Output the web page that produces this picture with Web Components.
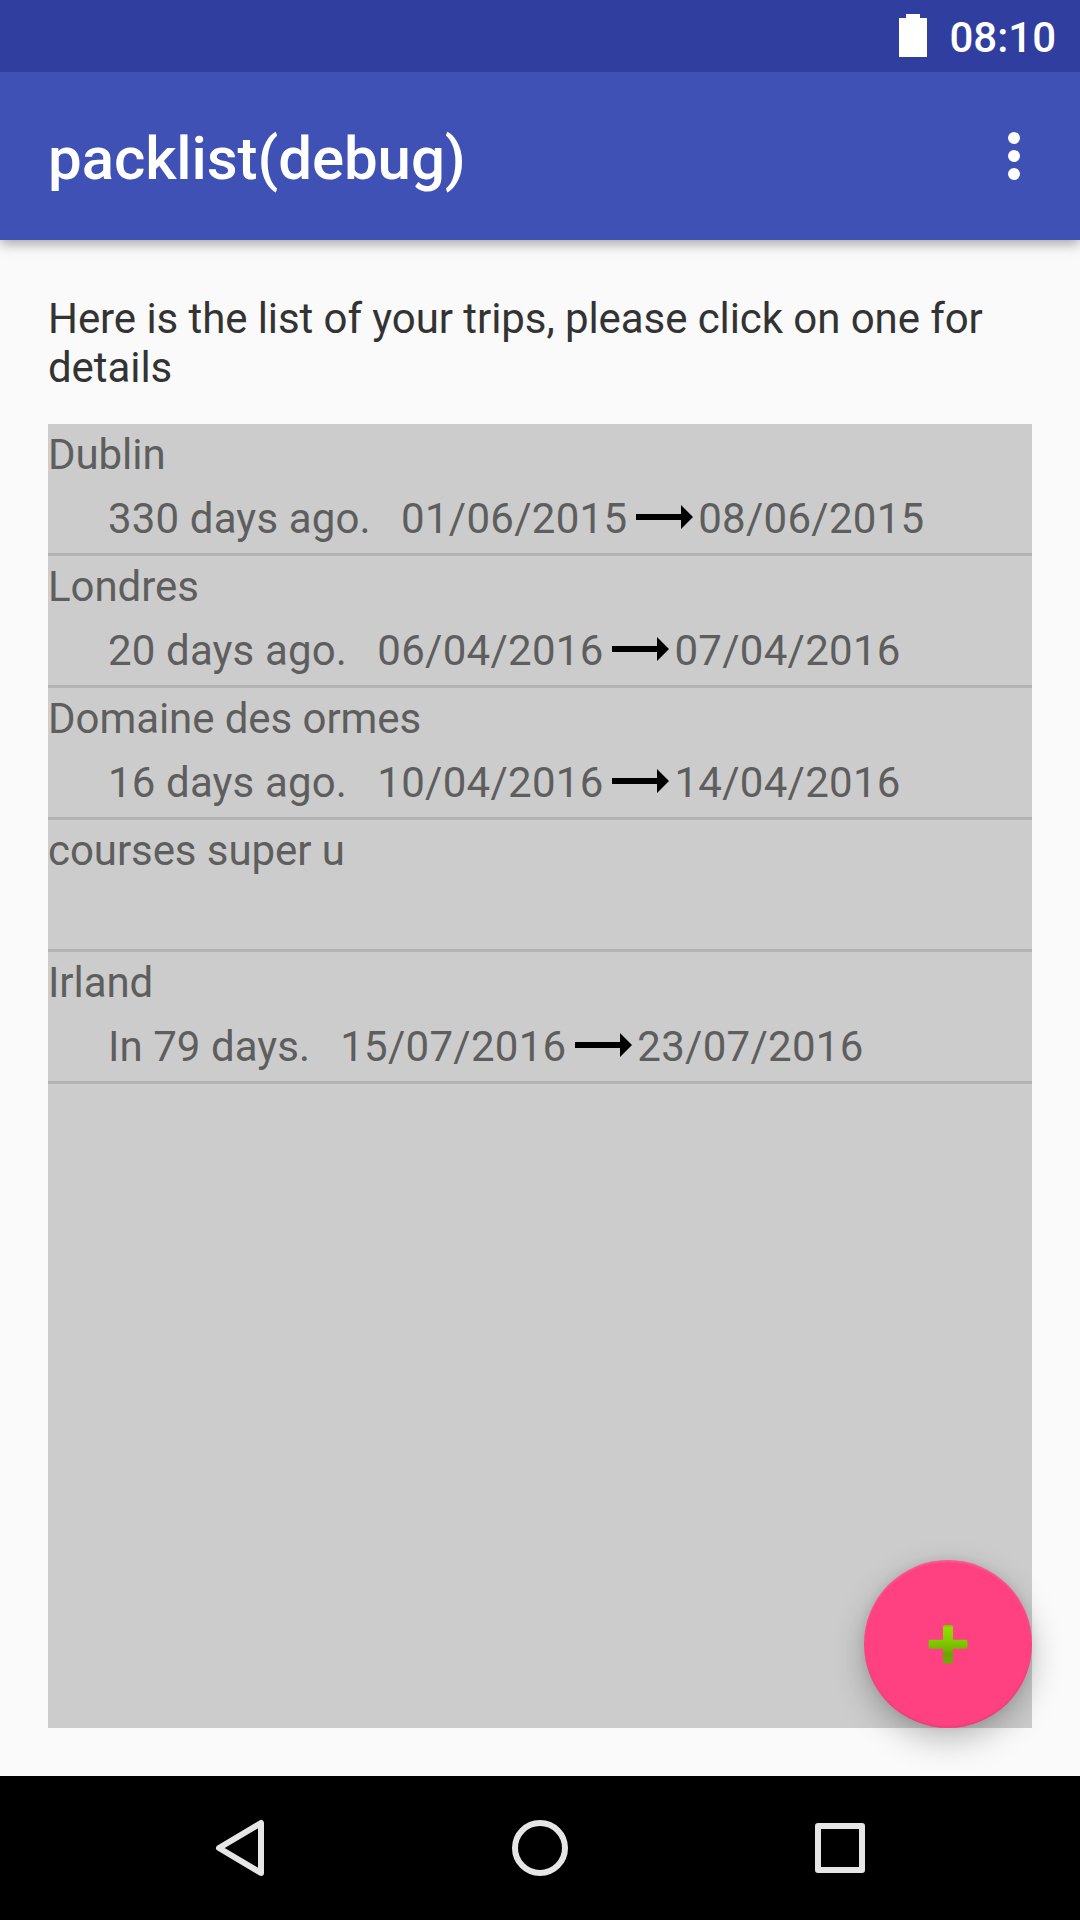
<!DOCTYPE html>
<html lang="en">
<head>
<meta charset="utf-8">
<title>packlist</title>
<style>
html,body{margin:0;padding:0}
body{width:1080px;height:1920px;overflow:hidden;font-family:Roboto,sans-serif;background:#fafafa}
</style>
</head>
<body>
<packlist-app></packlist-app>
<script>
const define=(name,html)=>customElements.define(name,class extends HTMLElement{
  constructor(){super();this.attachShadow({mode:'open'}).innerHTML=html;}
});

define('status-bar',`<style>
:host{display:flex;box-sizing:border-box;height:72px;flex:none;background:#303f9f;justify-content:flex-end;align-items:flex-start;padding:13px 24px 0 0;gap:22px;z-index:2}
svg{display:block;margin-top:1px}
span{font:500 42px/49px Roboto,sans-serif;color:#fff}
</style>
<svg width="28" height="43" viewBox="0 0 28 43"><path fill="#fff" d="M7 0h14v4h7v39H0V4h7z"/></svg>
<span><slot></slot></span>`);

define('tool-bar',`<style>
:host{display:flex;box-sizing:border-box;height:168px;flex:none;background:#3f51b5;justify-content:space-between;align-items:center;padding:0 60px 0 48px;box-shadow:0 4px 12px rgba(0,0,0,.34);z-index:1}
h1{margin:5px 0 0;font:500 60px/71px Roboto,sans-serif;letter-spacing:-.08px;color:#fff}
svg{display:block}
</style>
<h1><slot></slot></h1>
<svg width="12" height="48" viewBox="0 0 12 48" fill="#fff"><circle cx="6" cy="6" r="6"/><circle cx="6" cy="24" r="6"/><circle cx="6" cy="42" r="6"/></svg>`);

define('trip-item',`<style>
:host{display:flex;flex-direction:column;box-sizing:border-box;height:132px;padding-top:6px;gap:15px;border-bottom:3px solid #b3b3b3;font:42px/49px Roboto,sans-serif;color:#5e5e5e}
.name{letter-spacing:-.07px}
.when{display:flex;padding-left:60px;white-space:pre}
::slotted(span){letter-spacing:.15px;margin-right:-1.5px}
:host(.future) ::slotted(span){letter-spacing:.05px;margin-right:-1.3px}
</style>
<div class="name"><slot></slot></div>
<div class="when"><slot name="when"></slot></div>`);

define('date-range',`<style>
:host{display:flex;white-space:pre;letter-spacing:.28px}
svg{display:block;margin:11px 5.500px 0 8.300px}
</style>
<slot name="from"></slot>
<svg width="57" height="24" viewBox="0 0 57 24"><path d="M0 9h45V0l12 12-12 12v-9H0z"/></svg>
<slot name="to"></slot>`);

define('add-button',`<style>
:host{display:flex;width:168px;height:168px;border-radius:50%;background:#ff4081;align-items:center;justify-content:center;box-shadow:0 12px 32px rgba(0,0,0,.25),0 0 10px rgba(0,0,0,.08),inset 0 2px 2px rgba(255,255,255,.12),inset 0 -2px 2px rgba(0,0,0,.06)}
</style>
<svg width="40" height="40" viewBox="0 0 40 40"><defs><linearGradient id="g" x2="0" y2="1"><stop offset="0" stop-color="#80c000"/><stop offset=".08" stop-color="#8fdc00"/><stop offset=".4" stop-color="#84cc00"/><stop offset=".6" stop-color="#78b800"/><stop offset=".75" stop-color="#6ca400"/><stop offset="1" stop-color="#70ac08"/></linearGradient></defs><path fill="url(#g)" d="M16.500 1h7a1.500 1.500 0 0 1 1.500 1.500v13.300h13a1.500 1.500 0 0 1 1.500 1.500v6a1.500 1.500 0 0 1-1.500 1.500h-13v13.300a1.500 1.500 0 0 1-1.500 1.500h-7a1.500 1.500 0 0 1-1.500-1.500v-13.300h-13a1.500 1.500 0 0 1-1.500-1.500v-6a1.500 1.500 0 0 1 1.500-1.500h13v-13.300a1.500 1.500 0 0 1 1.500-1.500z"/></svg>`);

define('nav-bar',`<style>
:host{display:flex;height:144px;flex:none;background:#000;align-items:center;justify-content:center;gap:220px;z-index:1}
svg{display:block;fill:none;stroke:#e6e6e6;stroke-width:6;stroke-linejoin:round}
</style>
<svg width="80" height="80" viewBox="0 0 80 80"><path d="M19 40 61 15V65z"/></svg>
<svg width="80" height="80" viewBox="0 0 80 80"><circle cx="40" cy="40" r="25"/></svg>
<svg width="80" height="80" viewBox="0 0 80 80"><rect x="18" y="18" width="44" height="44"/></svg>`);

define('packlist-app',`<style>
:host{display:flex;flex-direction:column;width:1080px;height:1920px;background:#fafafa;overflow:hidden}
main{flex:1;display:flex;flex-direction:column;padding:54px 48px 48px;min-height:0}
p{margin:0 0 32px;font:42px/49px Roboto,sans-serif;letter-spacing:-.075px;color:#333}
section{flex:1;background:#ccc;position:relative}
add-button{position:absolute;right:0;bottom:0}
</style>
<status-bar>08:10</status-bar>
<tool-bar>packlist(debug)</tool-bar>
<main>
<p>Here is the list of your trips, please click on one for details</p>
<section>
<trip-item>Dublin<span slot="when">330 days ago.   </span><date-range slot="when"><span slot="from">01/06/2015</span><span slot="to">08/06/2015</span></date-range></trip-item>
<trip-item>Londres<span slot="when">20 days ago.   </span><date-range slot="when"><span slot="from">06/04/2016</span><span slot="to">07/04/2016</span></date-range></trip-item>
<trip-item>Domaine des ormes<span slot="when">16 days ago.   </span><date-range slot="when"><span slot="from">10/04/2016</span><span slot="to">14/04/2016</span></date-range></trip-item>
<trip-item>courses super u</trip-item>
<trip-item class="future">Irland<span slot="when">In 79 days.   </span><date-range slot="when"><span slot="from">15/07/2016</span><span slot="to">23/07/2016</span></date-range></trip-item>
<add-button></add-button>
</section>
</main>
<nav-bar></nav-bar>`);
</script>
</body>
</html>
